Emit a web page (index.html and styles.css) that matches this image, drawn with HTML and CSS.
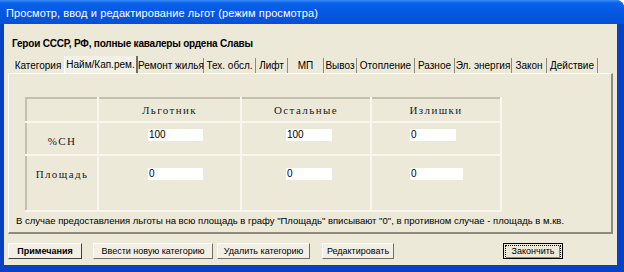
FILE: index.html
```html
<!DOCTYPE html>
<html lang="ru">
<head>
    <meta charset="UTF-8">
    <title>Просмотр, ввод и редактирование льгот</title>
    <link rel="stylesheet" href="styles.css">
</head>
<body>
    <div class="window">
        <div class="titlebar">Просмотр, ввод и редактирование льгот (режим просмотра)</div>
        <div class="client">
            <h1 class="category">Герои СССР, РФ, полные кавалеры ордена Славы</h1>
            <div class="tabs">
                <span class="tab t-cat">Категория</span>
                <span class="tab t-hire active">Найм/Кап.рем.</span>
                <span class="tab t-repair">Ремонт жилья</span>
                <span class="tab t-tech">Тех. обсл.</span>
                <span class="tab t-lift">Лифт</span>
                <span class="tab t-mp">МП</span>
                <span class="tab t-waste">Вывоз</span>
                <span class="tab t-heat">Отопление</span>
                <span class="tab t-misc">Разное</span>
                <span class="tab t-power">Эл. энергия</span>
                <span class="tab t-law">Закон</span>
                <span class="tab t-act">Действие</span>
            </div>
            <div class="panel">
                <table class="grid">
                    <tr class="head">
                        <td class="c1"></td>
                        <td class="c2">Льготник</td>
                        <td class="c3">Остальные</td>
                        <td class="c4">Излишки</td>
                    </tr>
                    <tr class="row-sn">
                        <td class="c1 label">%СН</td>
                        <td class="c2"><input class="in-a" type="text" value="100"></td>
                        <td class="c3"><input class="in-b" type="text" value="100"></td>
                        <td class="c4"><input class="in-c" type="text" value="0"></td>
                    </tr>
                    <tr class="row-area">
                        <td class="c1 label">Площадь</td>
                        <td class="c2"><input class="in-a" type="text" value="0"></td>
                        <td class="c3"><input class="in-b" type="text" value="0"></td>
                        <td class="c4"><input class="in-c wide" type="text" value="0"></td>
                    </tr>
                </table>
                <p class="note">В случае предоставления льготы на всю площадь в графу "Площадь" вписывают "0", в противном случае - площадь в м.кв.</p>
            </div>
            <div class="buttons">
                <button class="btn notes">Примечания</button>
                <button class="btn new-cat">Ввести новую категорию</button>
                <button class="btn del-cat">Удалить категорию</button>
                <button class="btn edit">Редактировать</button>
                <span class="spacer"></span>
                <button class="btn finish"><span class="focus">Закончить</span></button>
            </div>
        </div>
    </div>
</body>
</html>
```

FILE: styles.css
```css
body {
    margin: 0;
    background: #ffffff;
    font-family: "Liberation Sans", Arial, sans-serif;
}
.window {
    width: 624px;
    height: 272px;
    box-sizing: border-box;
    background: #0842c4;
    border-top-right-radius: 8px;
    padding: 0 7px 7px 4px;
    display: flex;
    flex-direction: column;
}
.titlebar {
    height: 24px;
    margin: 0 -7px 0 -4px;
    padding-left: 6px;
    border-top-right-radius: 8px;
    background: linear-gradient(#3a8cf8 0, #0a62ea 3px, #0558e2 50%, #0650d8 100%);
    color: #ffffff;
    font-size: 11px;
    letter-spacing: 0.1px;
    line-height: 26px;
    white-space: nowrap;
}
.client {
    flex: 1;
    min-height: 0;
    background: #ece9d8;
    display: flex;
    flex-direction: column;
    padding: 0 4px;
}
.category {
    margin: 14px 0 0 4px;
    font-size: 10px;
    font-weight: bold;
    letter-spacing: -0.2px;
    color: #000000;
    line-height: 12px;
}
.tabs {
    display: flex;
    margin: 8px 0 0 4px;
    height: 16px;
    font-size: 10px;
    color: #000000;
}
.tab {
    box-sizing: border-box;
    padding-top: 2px;
    text-align: center;
    border-right: 1px solid #8c8a80;
    white-space: nowrap;
}
.tab.active {
    margin-top: -2px;
    padding-top: 3px;
    height: 18px;
    background: #f2f0e7;
    border-left: 1px solid #ffffff;
    border-right: 2px solid #716f64;
}
.t-cat { width: 52px; border-right: none; }
.t-hire { width: 74px; }
.t-repair { width: 66px; }
.t-tech { width: 52px; }
.t-lift { width: 32px; }
.t-mp { width: 36px; }
.t-waste { width: 33px; }
.t-heat { width: 58px; }
.t-misc { width: 40px; }
.t-power { width: 57px; }
.t-law { width: 35px; }
.t-act { width: 51px; }
.panel {
    height: 161px;
    box-sizing: border-box;
    margin-top: -1px;
    border-top: 1px solid #ffffff;
    border-left: 1px solid #ffffff;
    border-right: 2px solid #8d8b80;
    border-bottom: 2px solid #8d8b80;
    padding: 23px 0 0 16px;
}
.grid {
    border-collapse: collapse;
    border-top: 2px solid #c4c0b0;
    border-left: 2px solid #c4c0b0;
    font-family: "Liberation Serif", "Times New Roman", serif;
    font-size: 11px;
    letter-spacing: 1.4px;
    color: #1a1a1a;
}
.grid td {
    border-right: 2px solid #f8f6ef;
    border-bottom: 2px solid #f8f6ef;
    padding: 0;
    vertical-align: top;
}
.grid .c1 { width: 70px; text-align: center; }
.grid .c2 { width: 141px; }
.grid .c3 { width: 128px; }
.grid .c4 { width: 128px; }
.head { height: 24px; }
.head td {
    text-align: center;
    vertical-align: middle;
}
.row-sn { height: 33px; }
.row-area { height: 56px; }
.grid .label { padding-top: 12px; }
.row-sn input { margin-top: 6px; }
.row-area input { margin-top: 12px; }
.grid input {
    display: block;
    height: 12px;
    box-sizing: border-box;
    border: none;
    padding: 0 0 0 1px;
    background: #ffffff;
    font-family: "Liberation Sans", Arial, sans-serif;
    font-size: 10px;
    letter-spacing: 0;
    line-height: 12px;
    color: #000000;
}
.grid .in-a { margin-left: 49px; width: 55px; }
.grid .in-b { margin-left: 44px; width: 46px; }
.grid .in-c { margin-left: 38px; width: 46px; }
.grid .in-c.wide { width: 53px; }
.note {
    margin: 3px 0 0 -9px;
    font-size: 9.5px;
    line-height: 12px;
    color: #000000;
    white-space: nowrap;
}
.buttons {
    display: flex;
    align-items: center;
    margin-top: 9px;
    padding-right: 50px;
}
.btn {
    height: 16px;
    box-sizing: border-box;
    padding: 0;
    margin-right: 4px;
    background: #f2f0e6;
    border: 1px solid;
    border-color: #ffffff #716f64 #716f64 #ffffff;
    font-family: "Liberation Sans", Arial, sans-serif;
    font-size: 9px;
    color: #000000;
    line-height: 13px;
    white-space: nowrap;
}
.btn.notes {
    font-weight: bold;
    width: 74px;
    margin-right: 11px;
    border-color: #ffffff #403f3a #403f3a #ffffff;
}
.btn.new-cat { width: 120px; }
.btn.del-cat { width: 93px; margin-right: 12px; }
.btn.edit { width: 72px; }
.spacer { flex: 1; }
.btn.finish {
    width: 60px;
    margin-right: 0;
    padding: 1px;
    border: 1px solid #000000;
    background: #ece9d8;
}
.finish .focus {
    display: block;
    height: 12px;
    line-height: 11px;
    border: 1px dotted #000000;
    box-shadow: inset -1px -1px 0 #8d8b80;
}
```
